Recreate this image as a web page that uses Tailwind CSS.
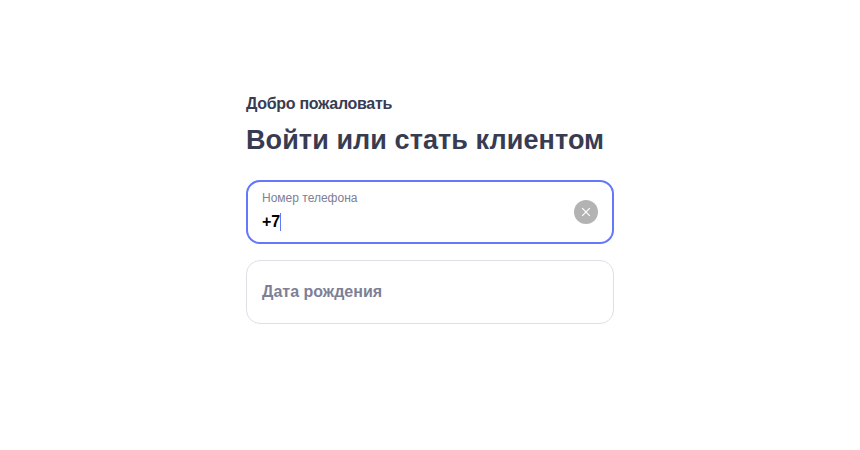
<!doctype html>
<html><head><meta charset="utf-8"><script src="https://cdn.jsdelivr.net/npm/@tailwindcss/browser@4"></script></head>
<body class="bg-white font-['Liberation_Sans',sans-serif]">
<main class="w-[860px] h-[450px] flex justify-center bg-white">
<div class="w-[368px] pt-[95px]">
<p class="text-[16px] leading-[18px] tracking-[-0.3px] font-bold text-[#383c52]">Добро пожаловать</p>
<h1 class="mt-[11px] text-[27px] leading-[32px] tracking-[0.08px] font-bold text-[#383c52] whitespace-nowrap">Войти или стать клиентом</h1>
<div class="mt-[24px] h-[64px] rounded-[14px] border-2 border-[#6478fa] px-[14px] flex items-center justify-between">
<div class="flex flex-col pb-[3px]">
<span class="text-[12px] leading-[14px] text-[#7d8096]">Номер телефона</span>
<span class="mt-[8px] flex items-center text-[16px] leading-[18px] font-bold text-black">+7<span class="w-px h-[18px] bg-[#6478fa]"></span></span>
</div>
<span class="w-6 h-6 rounded-full bg-[#b3b3b3] flex items-center justify-center">
<svg width="10" height="10" viewBox="0 0 10 10" fill="none" stroke="#fff" stroke-width="1.2"><path d="M1.2 1.2l7.6 7.6M8.8 1.2l-7.6 7.6"/></svg>
</span>
</div>
<div class="mt-4 h-[64px] rounded-[14px] border border-[#dfdfe8] px-[15px] flex items-center">
<span class="text-[16px] font-bold text-[#7d8096]">Дата рождения</span>
</div>
</div>
</main>
</body></html>
